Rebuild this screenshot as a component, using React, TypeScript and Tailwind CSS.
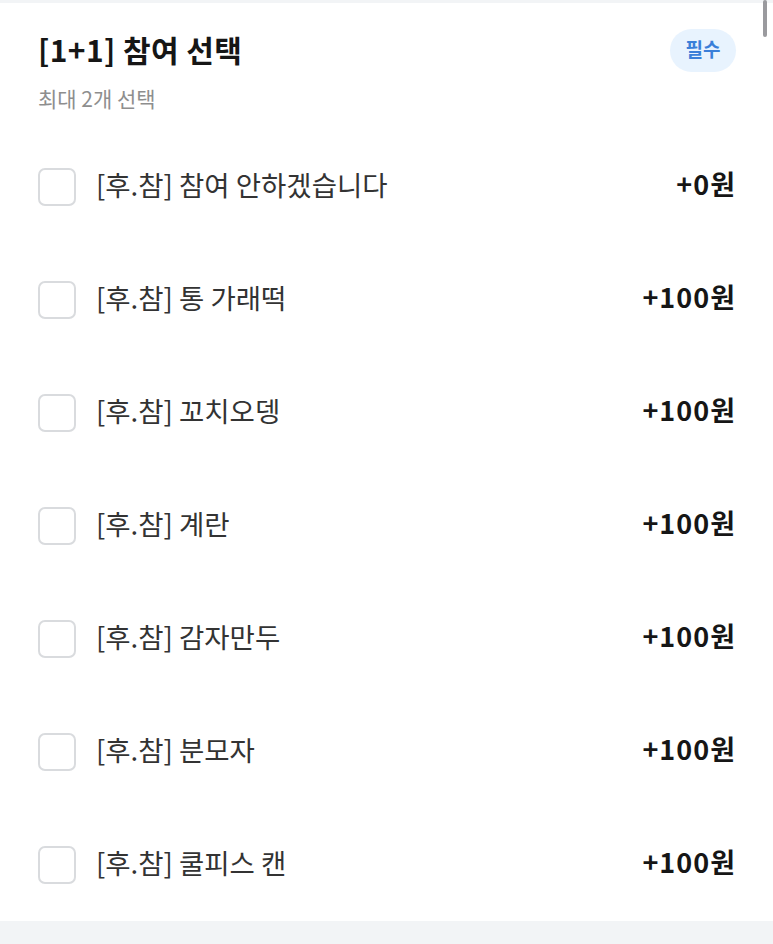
const OPTIONS: { name: string; price: number }[] = [
  { name: "[후.참] 참여 안하겠습니다", price: 0 },
  { name: "[후.참] 통 가래떡", price: 100 },
  { name: "[후.참] 꼬치오뎅", price: 100 },
  { name: "[후.참] 계란", price: 100 },
  { name: "[후.참] 감자만두", price: 100 },
  { name: "[후.참] 분모자", price: 100 },
  { name: "[후.참] 쿨피스 캔", price: 100 },
];

export default function App() {
  return (
    <div
      className="relative w-[773px] h-[944px] overflow-hidden bg-white"
      style={{ fontFamily: '"Noto Sans CJK KR", "Noto Sans", sans-serif' }}
    >
      {/* scrollbar thumb */}
      <div className="absolute right-[6px] top-0 h-[37px] w-[4px] rounded-full bg-[#9a9a9e]" />

      <div className="h-[3px] bg-[#f2f4f6]" />

      {/* Header */}
      <header className="px-[38px] pt-[26px] pb-[15px]">
        <div className="flex h-[43px] items-center justify-between">
          <h1 className="pb-[4px] text-[30px] leading-[40px] font-bold text-[#161616] tracking-[0.4px]">
            [1+1] 참여 선택
          </h1>
          <span className="flex h-[43px] w-[66px] items-center justify-center rounded-full bg-[#e8f3fe] pb-[2px] text-[19px] font-bold text-[#3a7fd9] mr-[-1px]">
            필수
          </span>
        </div>
        <p className="mt-[13px] pb-[4px] text-[21px] leading-[26px] text-[#8e8e8e]">최대 2개 선택</p>
      </header>

      {/* Options */}
      <ul>
        {OPTIONS.map((opt) => (
          <li key={opt.name} className="flex h-[113px] items-center px-[38px]">
            <span className="h-[38px] w-[38px] shrink-0 rounded-[7px] border-2 border-[#d9dbde] bg-white" />
            <span className="ml-[20px] flex-1 pb-[5px] text-[27.5px] leading-[36px] text-[#333333]">
              {opt.name}
            </span>
            <span className="pb-[5px] text-[27px] leading-[36px] font-bold text-[#161616] tracking-[1px] mr-[-1px]">
              +{opt.price}원
            </span>
          </li>
        ))}
      </ul>

      <div className="h-[30px] bg-[#f2f4f6]" />
    </div>
  );
}
